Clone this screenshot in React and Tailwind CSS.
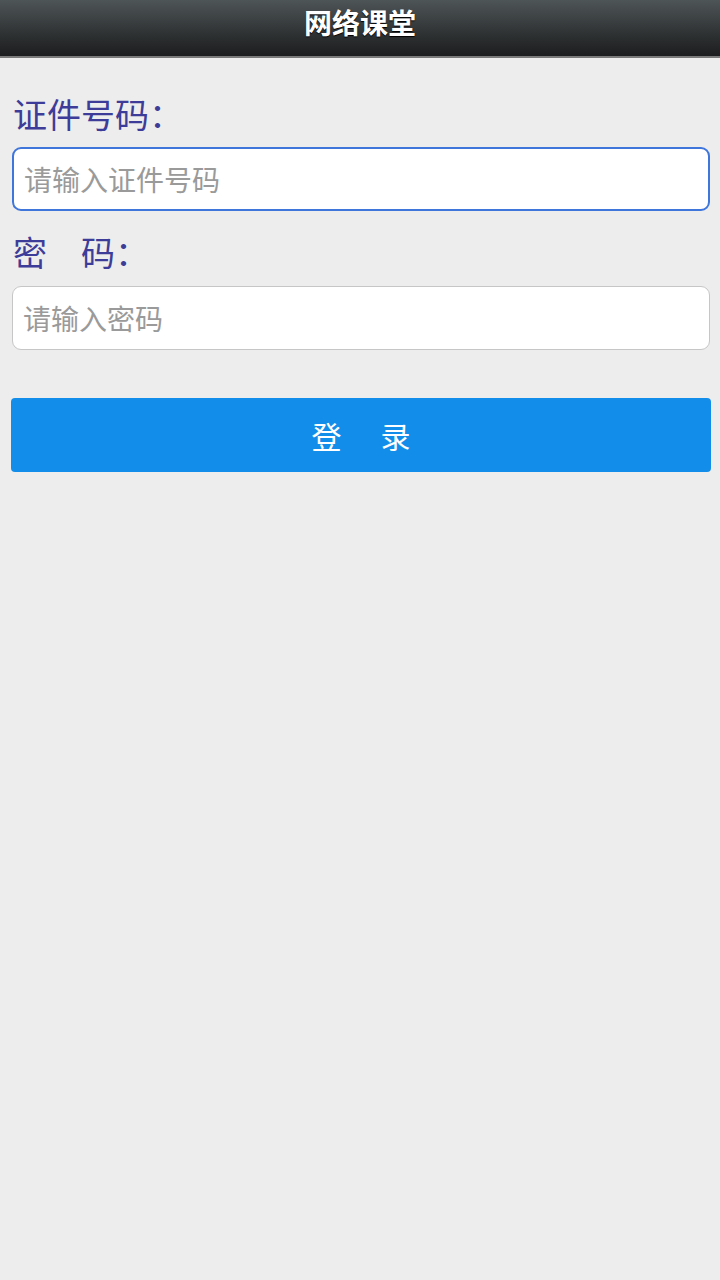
const FONT = {
  fontFamily: '"Noto Sans CJK SC", "Noto Sans", sans-serif',
};

const App = () => {
  return (
    <div
      className="min-h-[1280px] w-full bg-[#ededed] font-['Noto_Sans_CJK_SC',sans-serif]"
      style={FONT}
    >
      {/* Header */}
      <div className="h-[58px] border-b-2 border-[#7a7a7a] bg-gradient-to-b from-[#4e5557] to-[#1c1d1e] flex items-start justify-center">
        <h1 className="mt-[2px] text-[28px] leading-[40px] font-bold text-white [text-shadow:0_1px_1px_#000]">
          网络课堂
        </h1>
      </div>

      {/* Login form */}
      <div className="pl-3 pr-[10px]">
        <label className="block mt-[35px] pl-px text-[34px] leading-[42px] text-[#3d3d99]">
          证件号码：
        </label>
        <input
          type="text"
          placeholder="请输入证件号码"
          className="mt-3 block w-full h-[64px] px-[10px] rounded-[9px] border-2 border-[#3f76dc] bg-white text-[28px] text-[#333] placeholder:text-[#9a9a9a] outline-none"
        />

        <label className="block mt-[20px] pl-px text-[34px] leading-[42px] text-[#3d3d99]">
          密　码：
        </label>
        <input
          type="password"
          placeholder="请输入密码"
          className="mt-[13px] block w-full h-[64px] px-[10px] rounded-[9px] border border-[#c6c6c6] bg-white text-[28px] text-[#333] placeholder:text-[#9a9a9a] outline-none"
        />

        <button className="mt-[48px] -ml-px w-[calc(100%+2px)] h-[74px] rounded-[4px] bg-[#128eea] text-white text-[30px] flex items-center justify-center">
          <span>登</span>
          <span className="ml-[39px]">录</span>
        </button>
      </div>
    </div>
  );
};

export default App;
